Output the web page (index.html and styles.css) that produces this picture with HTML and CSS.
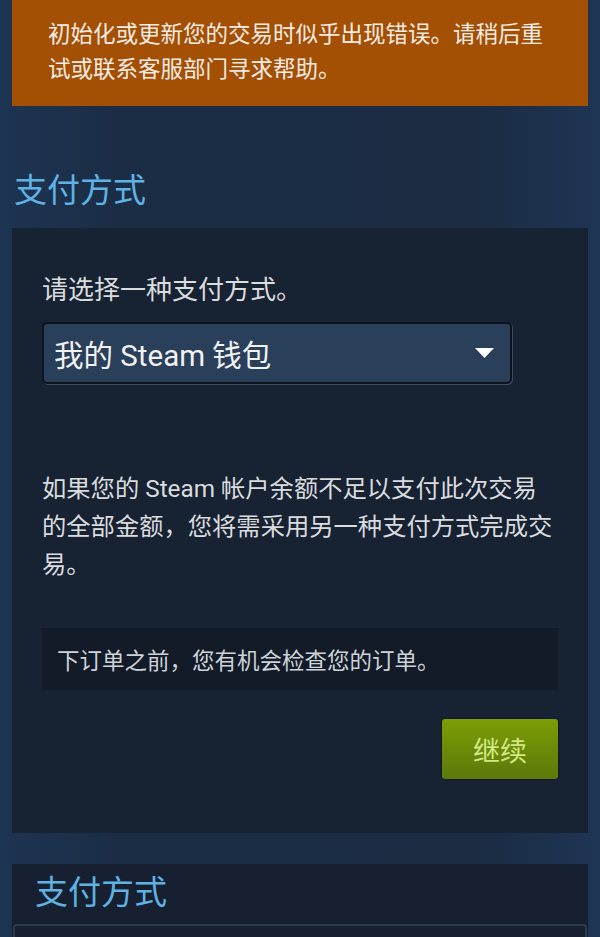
FILE: index.html
```html
<!doctype html>
<html lang="zh-CN">
  <head>
    <meta charset="utf-8">
    <meta name="viewport" content="width=device-width, initial-scale=1.0">
    <title>支付方式</title>
    <link rel="stylesheet" href="styles.css">
  </head>
  <body>
    <main>

      <!-- error banner -->
      <div class="error">初始化或更新您的交易时似乎出现错误。请稍后重试或联系客服部门寻求帮助。</div>

      <h2 class="title">支付方式</h2>

      <section class="panel">
        <p class="label">请选择一种支付方式。</p>

        <div class="select">
          <span>我的 Steam 钱包</span>
          <svg width="19" height="10" viewBox="0 0 19 10"><path d="M0 0H19L9.5 10Z" fill="#fff"/></svg>
        </div>

        <p class="info">如果您的 Steam 帐户余额不足以支付此次交易的全部金额，您将需采用另一种支付方式完成交易。</p>

        <div class="note">下订单之前，您有机会检查您的订单。</div>

        <div class="actions">
          <button class="btn">继续</button>
        </div>
      </section>

      <section class="panel panel-second">
        <h2 class="title small">支付方式</h2>
        <div class="box"></div>
      </section>

    </main>
  </body>
</html>
```

FILE: styles.css
```css
html, body {
  margin: 0;
  padding: 0;
}
body {
  background: linear-gradient(to right, #1d3452 0%, #1b2d45 20%, #1b2c43 80%, #1e3554 100%);
  color: #dadcde;
  font-family: Roboto, "Noto Sans CJK SC", sans-serif;
  height: 937px;
  overflow: hidden;
}
main {
  padding: 0 12px;
}

.error {
  background-color: #a34f04;
  color: #f4ece4;
  font-size: 22.5px;
  line-height: 35px;
  padding: 17px 40px 19px 36px;
}

.title {
  color: #5fb2e3;
  font-size: 33px;
  font-weight: normal;
  line-height: 40px;
  margin: 65px 0 17px 2px;
}

.panel {
  background-color: #172233;
  padding: 44px 30px 54px 30px;
}

.label {
  font-size: 26px;
  line-height: 36px;
  margin: 0 0 14px 0;
}

.select {
  box-sizing: border-box;
  width: 470px;
  height: 62px;
  display: flex;
  align-items: center;
  justify-content: space-between;
  padding: 0 16px 0 10px;
  background-color: #2a3f5a;
  border: 2px solid #0c131d;
  border-radius: 5px;
  box-shadow: 1px 1px 0 #3a4d63;
  color: #f2f2f2;
  font-size: 29.5px;
}

.info {
  font-size: 24.3px;
  line-height: 38px;
  margin: 86px 0 44px 0;
}

.note {
  background-color: #121b27;
  color: #cdd3d9;
  font-size: 22.5px;
  height: 62px;
  display: flex;
  align-items: center;
  padding: 0 15px;
}

.actions {
  display: flex;
  justify-content: flex-end;
  margin-top: 29px;
}
.btn {
  width: 116px;
  height: 60px;
  border: none;
  border-radius: 3px;
  background: linear-gradient(to bottom, #7d9e05 0%, #5a790b 100%);
  box-shadow: 0 0 2px rgba(0,0,0,0.6);
  color: #d2e885;
  font-family: Roboto, "Noto Sans CJK SC", sans-serif;
  font-size: 27px;
  padding: 0;
}

.panel-second {
  margin-top: 31px;
  padding: 9px 1px 0 1px;
  background-color: #162030;
}
.title.small {
  margin: 0 0 11px 22px;
}
.box {
  height: 60px;
  border: 2px solid #2c3b4e;
  border-radius: 4px;
}
```
